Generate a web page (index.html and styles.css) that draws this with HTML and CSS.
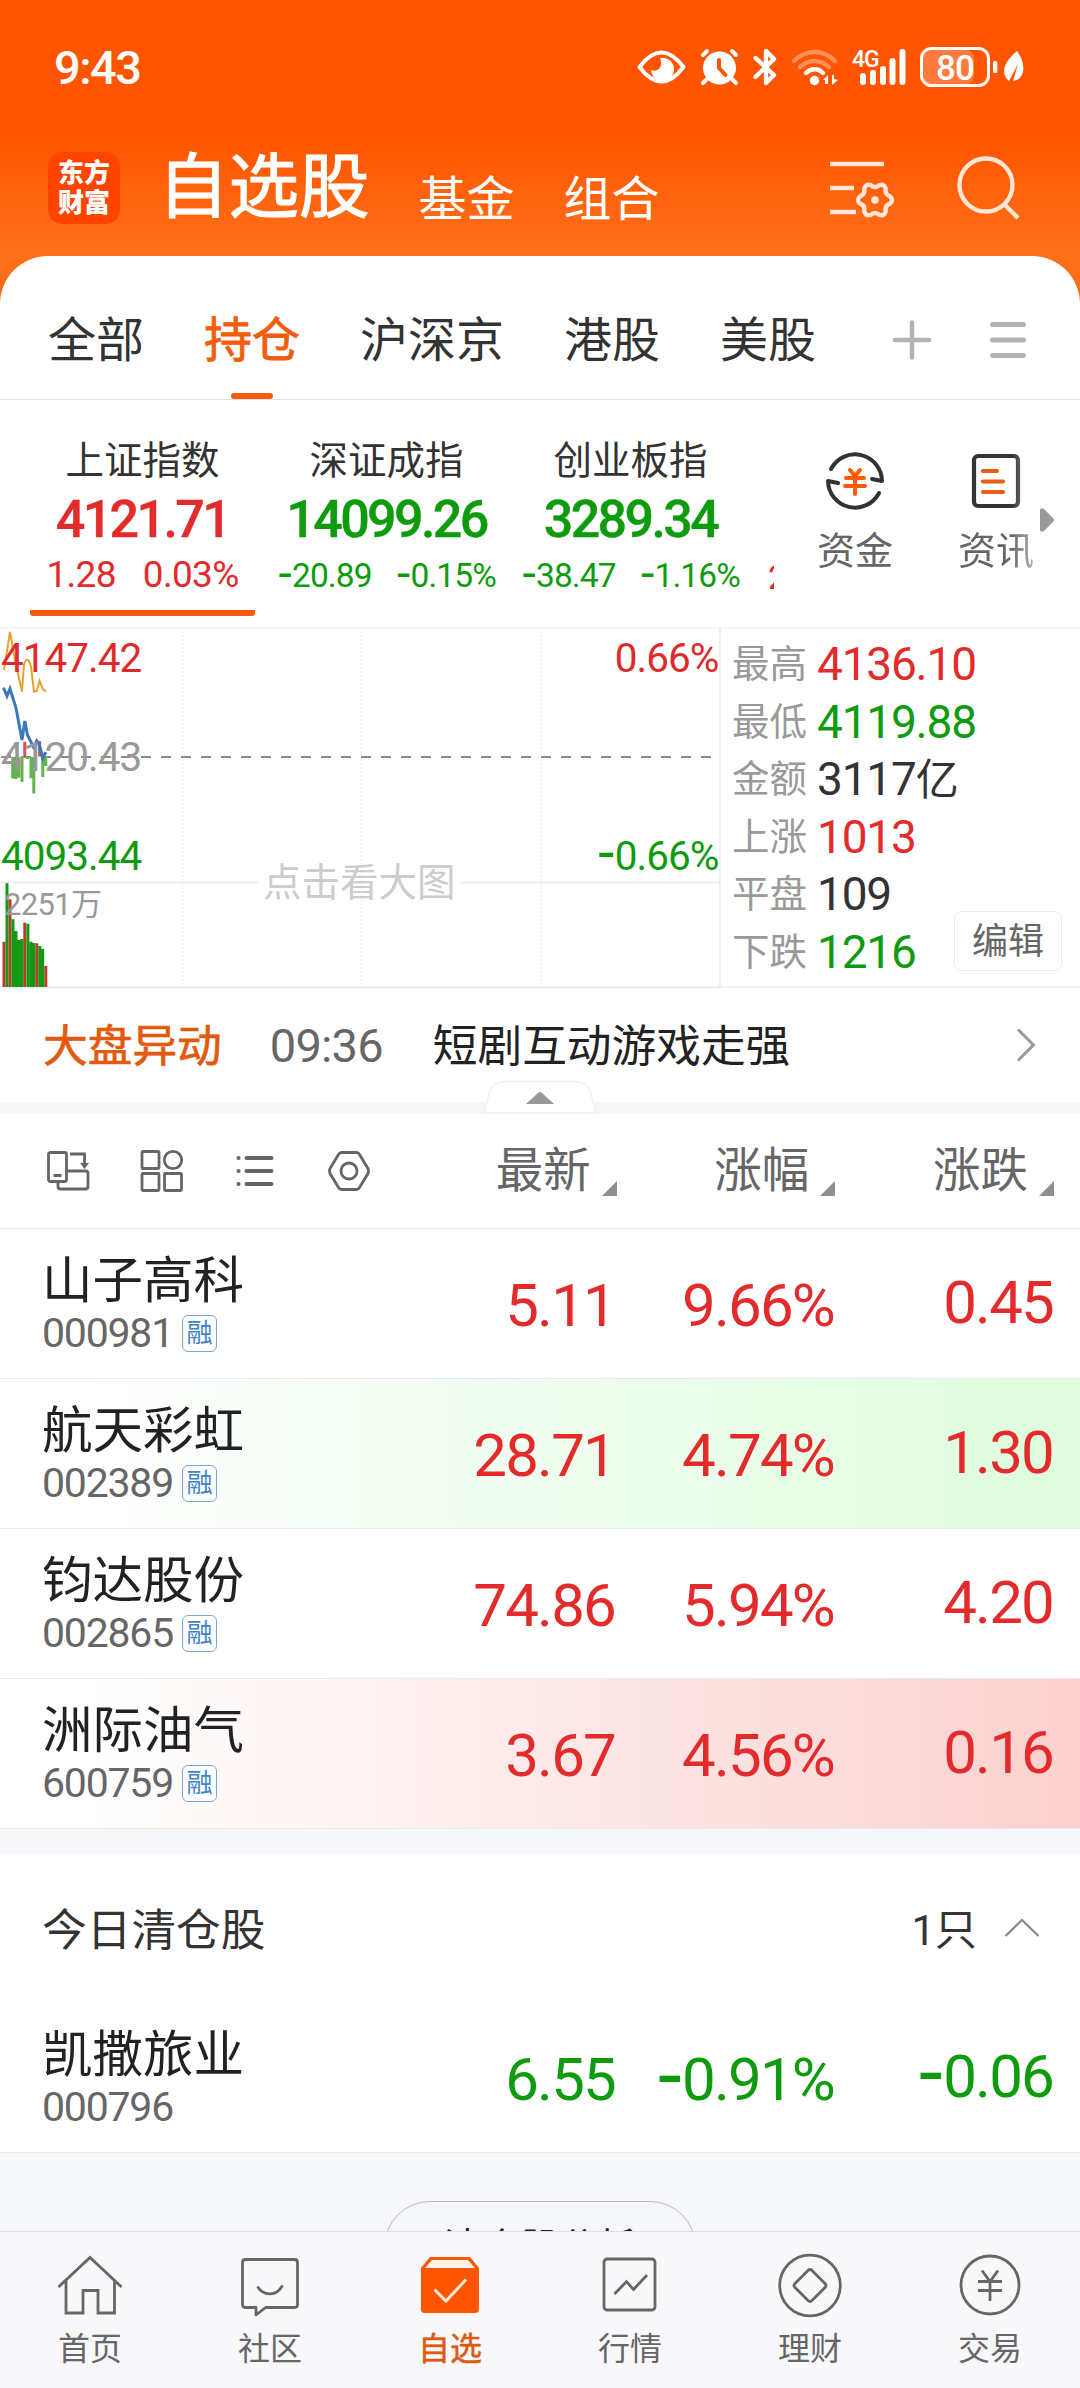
FILE: index.html
```html
<!DOCTYPE html>
<html lang="zh-CN">
<head>
    <meta charset="UTF-8">
    <meta name="viewport" content="width=device-width, initial-scale=1.0">
    <title>自选股</title>
    <link rel="stylesheet" href="styles.css">
</head>
<body>
    <div class="app">
        <header class="header">
            <div class="status-bar">
                <span class="time">9:43</span>
                <svg class="status-icons" width="392" height="46" viewBox="636 44 392 46" fill="none" stroke="#fff" stroke-linecap="round" stroke-linejoin="round">
                    <!-- eye -->
                    <path d="M640.5 67C648 57 655 52.500 662.500 52.500S677 57 684.500 67C677 77 670 81.500 662.500 81.500S648 77 640.500 67z" stroke-width="4"/>
                    <path d="M661 58a11.500 11.500 0 1 1-9 12c6 3 13-3 9-12z" fill="#fff" stroke="none"/>
                    <!-- alarm -->
                    <circle cx="720.500" cy="68" r="16.500" fill="#fff" stroke="none"/>
                    <path d="M704 55l4-4M737 55l-4-4M708 79l-4 4M733 79l4 4" stroke-width="4"/>
                    <path d="M720 60v8l6.500 7" stroke="#ff5500" stroke-width="4"/>
                    <!-- bluetooth -->
                    <path d="M756.500 58l18.500 17-8 8V51l8 8-18.500 18" stroke-width="4.400"/>
                    <!-- wifi -->
                    <path d="M795 61c12-12 29-12 41 0M801 67c9-8 20-8 29 0" stroke-width="4.400" opacity="0.350"/>
                    <path d="M807 73c5-5 12-5 17 0" stroke-width="4.400"/>
                    <circle cx="815.500" cy="80.500" r="4.700" fill="#fff" stroke="none"/>
                    <path d="M824 80l5-5v9h-3v-4zM839 80l-6 5V75h2v4z" fill="#fff" stroke="none"/>
                    <!-- signal -->
                    <text x="853" y="67" class="net-label">4G</text>
                    <path d="M864 76v6M874 73v9M884 69v13M893.500 61v21M903.500 52v30" stroke-width="6"/>
                    <!-- battery -->
                    <rect x="924" y="50" width="51" height="34" rx="8" fill="#ff7a3d" stroke="none"/>
                    <rect x="922.500" y="48.500" width="67" height="37" rx="10" stroke-width="3"/>
                    <text x="937" y="80" class="battery-label">80</text>
                    <path d="M996.200 63v8" stroke-width="4.400"/>
                    <!-- leaf -->
                    <path d="M1018 51c9 12 9 28-4 30l5-17-9 17c-9-8-5-19 8-30z" fill="#fff" stroke="none"/>
                </svg>
            </div>
            <div class="title-bar">
                <div class="logo"><span>东方</span><span>财富</span></div>
                <h1>自选股</h1>
                <a class="head-link" href="#">基金</a>
                <a class="head-link" href="#">组合</a>
                <div class="head-actions">
                    <svg width="64" height="64" viewBox="0 0 64 64" fill="none" stroke="#ffe6d6" stroke-width="4.400">
                        <path d="M0 8h54M0 32h24M0 56h26"/>
                        <path d="M60 47.700Q54.500 49.500 55.800 55.100Q54.500 60.500 49.300 58.900Q45 55 40.700 58.900Q35.500 60.500 34.200 55.100Q35.500 49.500 30 47.700Q26 44 30 40.300Q35.500 38.500 34.200 32.900Q35.500 27.500 40.700 29.100Q45 33 49.300 29.100Q54.500 27.500 55.800 32.900Q54.500 38.500 60 40.300Q64 44 60 47.700z" stroke-linejoin="round"/>
                        <circle cx="45" cy="44" r="3.800" fill="#ffe6d6" stroke="none"/>
                    </svg>
                    <svg width="64" height="64" viewBox="0 0 64 64" fill="none" stroke="#ffe6d6" stroke-width="4.400">
                        <circle cx="29" cy="29" r="26.500"/>
                        <path d="M47 48l14 14"/>
                    </svg>
                </div>
            </div>
        </header>

        <main class="panel">
            <nav class="tabs">
                <a href="#">全部</a>
                <a href="#" class="active">持仓</a>
                <a href="#">沪深京</a>
                <a href="#">港股</a>
                <a href="#">美股</a>
                <svg class="tab-add" width="40" height="40" viewBox="0 0 40 40" stroke="#b2b2b2" stroke-width="4.500" stroke-linecap="round">
                    <path d="M20 2.500v35M3 20h34"/>
                </svg>
                <svg class="tab-menu" width="36" height="40" viewBox="0 0 36 40" stroke="#b2b2b2" stroke-width="5" stroke-linecap="round">
                    <path d="M2.500 4.500h31M2.500 20h31M2.500 35.500h31"/>
                </svg>
            </nav>

            <section class="indices">
                <div class="index-list">
                    <div class="index active">
                        <span class="index-name">上证指数</span>
                        <span class="index-value up">4121.71</span>
                        <span class="index-change up"><b>1.28</b><b>0.03%</b></span>
                    </div>
                    <div class="index">
                        <span class="index-name">深证成指</span>
                        <span class="index-value down">14099.26</span>
                        <span class="index-change small down"><b><i class="neg">-</i>20.89</b><b><i class="neg">-</i>0.15%</b></span>
                    </div>
                    <div class="index">
                        <span class="index-name">创业板指</span>
                        <span class="index-value down">3289.34</span>
                        <span class="index-change small down"><b><i class="neg">-</i>38.47</b><b><i class="neg">-</i>1.16%</b></span>
                    </div>
                    <div class="index next">
                        <span class="index-change small up"><b>2</b></span>
                    </div>
                </div>
                <a class="shortcut" href="#">
                    <svg width="62" height="62" viewBox="0 0 62 62" fill="none" stroke="#333" stroke-width="4" stroke-linecap="round" stroke-linejoin="round">
                        <path d="M7 19a27 27 0 0 1 51 12l-10-2"/>
                        <path d="M55 43A27 27 0 0 1 4 31l10 2"/>
                        <path d="M26 20l5 6 5-6M22 28h18M21 36h20M31 27v17" stroke="#ff5a05"/>
                    </svg>
                    <span>资金</span>
                </a>
                <a class="shortcut fade" href="#">
                    <svg width="62" height="62" viewBox="0 0 62 62" fill="none" stroke="#333" stroke-width="4.200" stroke-linecap="round">
                        <rect x="9" y="6" width="44" height="50" rx="4"/>
                        <path d="M18 21h14M18 31.500h20M18 42h20" stroke="#eb5c14"/>
                    </svg>
                    <span>资讯</span>
                </a>
                <svg class="more-arrow" width="16" height="26" viewBox="0 0 16 26"><path d="M1 3q0-3 4-1l9 9q2 2 0 4l-9 9q-4 2-4-1z" fill="#999"/></svg>
            </section>

            <section class="market">
                <svg class="chart" width="721" height="360" viewBox="0 0 721 360" fill="none">
                    <path d="M182.500 2v356M361.500 2v356M541.500 2v356" stroke="#ececec" stroke-dasharray="2 2"/>
                    <path d="M1 253.500h257M460 253.500h260M1 358.500h719M720 0v359" stroke="#eee" stroke-width="2"/>
                    <path d="M1 128H715" stroke="#8c8c8c" stroke-width="2.200" stroke-dasharray="10 10"/>
                    <!-- strength bars around the middle line -->
                    <path d="M9 124v4M24.800 112.700v15M39.600 112v15.500" stroke="#d9534f" stroke-width="3"/>
                    <path d="M12.700 128v21.500M15.700 128v22M18.700 128v20.700M22 128v25M27.500 128v2M31 128v21.300M33.800 128v36.500M42.800 128v20M45.800 128v9" stroke="#62b54c" stroke-width="3"/>
                    <path d="M4 41L10 3l5 28 7 31.700 2-27q3.500-11 7 2l3 25 3-1 2.600-10 3 8 3.200 3" stroke="#eaa030" stroke-width="2"/>
                    <path d="M3 59l1 1 3 7 3-7.300 6 19.300 6 32 2.800-19 2.700 14 6 12 3.300-6 2.800 4.300 3.100 13 3.100-6.300" stroke="#3d78bd" stroke-width="3"/>
                    <!-- volume -->
                    <path d="M4 312.700V358M10 270.300V358M24.800 293.700V358M36.800 314.300V358M45.800 337V358" stroke="#c23a2e" stroke-width="3"/>
                    <path d="M7 254.300V358M13 290.300V358M16 302V358M19 311V358M22 310V358M27.900 294.700V358M31 312.700V358M33.800 314V358M39.700 317V358M42.700 319.700V358" stroke="#129a12" stroke-width="3"/>
                    <text x="1" y="43" class="axis" fill="#dd2b2b">4147.42</text>
                    <text x="1" y="142" class="axis" fill="#999">4120.43</text>
                    <text x="1" y="241" class="axis" fill="#0e9b0e">4093.44</text>
                    <text x="718.500" y="43" class="axis end" fill="#dd2b2b">0.66%</text>
                    <text x="718.500" y="241" class="axis end" fill="#0e9b0e"><tspan class="neg">-</tspan>0.66%</text>
                    <text x="4" y="286" class="volume" fill="#999">2251万</text>
                    <text x="263" y="267" class="hint" fill="#ccc">点击看大图</text>
                </svg>
                <dl class="stats">
                    <dt>最高</dt><dd class="up">4136.10</dd>
                    <dt>最低</dt><dd class="down">4119.88</dd>
                    <dt>金额</dt><dd>3117<span class="unit">亿</span></dd>
                    <dt>上涨</dt><dd class="up">1013</dd>
                    <dt>平盘</dt><dd>109</dd>
                    <dt>下跌</dt><dd class="down">1216</dd>
                </dl>
                <a class="edit-btn" href="#">编辑</a>
            </section>

            <section class="news">
                <span class="news-tag">大盘异动</span>
                <span class="news-time">09:36</span>
                <span class="news-title">短剧互动游戏走强</span>
                <svg width="20" height="36" viewBox="0 0 20 36" fill="none" stroke="#999" stroke-width="3"><path d="M2 2.500L17.500 18 2 33.500"/></svg>
                <svg class="handle" width="114" height="34" viewBox="0 0 114 34">
                    <path d="M1.500 32.500L5 17Q9 1.500 22 1.500H92Q105 1.500 109 17l3.500 15.500z" fill="#fff" stroke="#f2f2f4" stroke-width="1.500"/>
                    <path d="M43 24L55 13q2-2 4 0l12 11z" fill="#999"/>
                </svg>
            </section>
            <div class="strip"></div>

            <section class="toolbar">
                <div class="tools">
                    <svg width="44" height="44" viewBox="0 0 44 44" fill="none" stroke="#666" stroke-width="2.800">
                        <rect x="2.500" y="3.500" width="18" height="29" rx="2"/>
                        <path d="M7.500 26.500h8M24 5h14.500v10M20.500 22h19q2.500 0 2.500 2.500v13q0 2.500-2.500 2.500h-25q-2.500 0-2.500-2.500v-5"/>
                        <path d="M34 14h9l-4.500 6z" fill="#666" stroke="none"/>
                    </svg>
                    <svg width="44" height="44" viewBox="0 0 44 44" fill="none" stroke="#666" stroke-width="2.800">
                        <rect x="2" y="2.500" width="17" height="17" rx="1"/>
                        <circle cx="33" cy="11" r="8.700"/>
                        <rect x="2" y="24.500" width="17" height="17" rx="1"/>
                        <rect x="24.500" y="24.500" width="17" height="17" rx="1"/>
                    </svg>
                    <svg width="44" height="44" viewBox="0 0 44 44" stroke="#666" stroke-width="4" stroke-linecap="round">
                        <path d="M4.500 9h.1M4.500 22h.1M4.500 35h.1M12.500 9h25M12.500 22h25M12.500 35h25"/>
                    </svg>
                    <svg width="44" height="44" viewBox="0 0 44 44" fill="none" stroke="#666" stroke-width="2.800" stroke-linejoin="round">
                        <path d="M13.500 3.500h15q2 0 3 2l8.500 14q1 2.500 0 5l-8.500 14q-1 2-3 2h-15q-2 0-3-2l-8.500-14q-1-2.500 0-5l8.500-14q1-2 3-2z"/>
                        <circle cx="21" cy="22" r="8"/>
                    </svg>
                </div>
                <span class="sort">最新</span>
                <span class="sort">涨幅</span>
                <span class="sort">涨跌</span>
            </section>

            <section class="stocks">
                <div class="stock">
                    <div class="stock-info">
                        <span class="stock-name">山子高科</span>
                        <span class="stock-code">000981<i class="badge">融</i></span>
                    </div>
                    <span class="num up">5.11</span>
                    <span class="num up">9.66%</span>
                    <span class="num diff up">0.45</span>
                </div>
                <div class="stock flash-down">
                    <div class="stock-info">
                        <span class="stock-name">航天彩虹</span>
                        <span class="stock-code">002389<i class="badge">融</i></span>
                    </div>
                    <span class="num up">28.71</span>
                    <span class="num up">4.74%</span>
                    <span class="num diff up">1.30</span>
                </div>
                <div class="stock">
                    <div class="stock-info">
                        <span class="stock-name">钧达股份</span>
                        <span class="stock-code">002865<i class="badge">融</i></span>
                    </div>
                    <span class="num up">74.86</span>
                    <span class="num up">5.94%</span>
                    <span class="num diff up">4.20</span>
                </div>
                <div class="stock flash-up">
                    <div class="stock-info">
                        <span class="stock-name">洲际油气</span>
                        <span class="stock-code">600759<i class="badge">融</i></span>
                    </div>
                    <span class="num up">3.67</span>
                    <span class="num up">4.56%</span>
                    <span class="num diff up">0.16</span>
                </div>
            </section>
            <div class="strip tall"></div>

            <section class="cleared">
                <div class="cleared-head">
                    <span>今日清仓股</span>
                    <span class="count">1只</span>
                    <svg width="36" height="20" viewBox="0 0 36 20" fill="none" stroke="#888" stroke-width="2.200"><path d="M1.500 18L18 2l16.500 16"/></svg>
                </div>
                <div class="stock">
                    <div class="stock-info">
                        <span class="stock-name">凯撒旅业</span>
                        <span class="stock-code">000796</span>
                    </div>
                    <span class="num down">6.55</span>
                    <span class="num down"><i class="neg">-</i>0.91%</span>
                    <span class="num diff down"><i class="neg">-</i>0.06</span>
                </div>
            </section>

            <div class="page-end">
                <a class="pill" href="#">清仓股分析</a>
            </div>
        </main>

        <nav class="bottom-nav">
            <a href="#">
                <svg width="66" height="66" viewBox="0 0 66 66" fill="none" stroke="#666" stroke-width="2.800">
                    <path d="M1.500 35L33 5.500 64.500 35M9 29v32h17V38.500h15V61h16.500V29"/>
                </svg>
                <span>首页</span>
            </a>
            <a href="#">
                <svg width="66" height="66" viewBox="0 0 66 66" fill="none" stroke="#666" stroke-width="2.800" stroke-linejoin="round">
                    <path d="M8.500 7.500h49q3 0 3 3v42q0 3-3 3H28.500l-9.500 7.500v-7.500H8.500q-3 0-3-3v-42q0-3 3-3z"/>
                    <path d="M20.500 34.500c6 10 19 10 25-1"/>
                </svg>
                <span>社区</span>
            </a>
            <a href="#" class="active">
                <svg width="66" height="66" viewBox="0 0 66 66" fill="none">
                    <path d="M4 16l9-11h40l9 11v41q0 4-4 4H8q-4 0-4-4z" fill="#ff5500"/>
                    <path d="M8 16l7-8h36l7 8z" fill="#fff3ea"/>
                    <path d="M17.500 37.500L29 49l20-21.500" stroke="#ffe9d8" stroke-width="3"/>
                </svg>
                <span>自选</span>
            </a>
            <a href="#">
                <svg width="66" height="66" viewBox="0 0 66 66" fill="none" stroke="#666" stroke-width="2.800">
                    <rect x="7" y="7" width="51" height="51" rx="3"/>
                    <path d="M17.500 42L29.500 29.500l7 8L50 23"/>
                </svg>
                <span>行情</span>
            </a>
            <a href="#">
                <svg width="66" height="66" viewBox="0 0 66 66" fill="none" stroke="#666" stroke-width="2.800" stroke-linejoin="round">
                    <circle cx="33" cy="33.500" r="30.300"/>
                    <path d="M31 18.500q2-2 4 0L48 31.500q2 2 0 4L35 48.500q-2 2-4 0L18 35.500q-2-2 0-4z"/>
                </svg>
                <span>理财</span>
            </a>
            <a href="#">
                <svg width="66" height="66" viewBox="0 0 66 66" fill="none" stroke="#666" stroke-width="2.800">
                    <circle cx="33" cy="33" r="29"/>
                    <path d="M25 18.500l8 11 8-11M21 29.500h24M21 38.500h24M33 29v20"/>
                </svg>
                <span>交易</span>
            </a>
        </nav>
    </div>
</body>
</html>
```

FILE: styles.css
```css
* {
    box-sizing: border-box;
}

body {
    font-family: Roboto, "Noto Sans CJK SC", sans-serif;
    background-color: #fff;
    margin: 0;
    padding: 0;
    color: #333;
}

a {
    color: inherit;
    text-decoration: none;
}

svg {
    display: block;
    flex-shrink: 0;
}

.app {
    width: 1080px;
    height: 2388px;
    display: flex;
    flex-direction: column;
    overflow: hidden;
    background: linear-gradient(#ff5500 0, #ff5500 135px, #ff6f1a 250px);
}

.up {
    color: #e32b2b;
}

.down {
    color: #0e9b0e;
}

/* wider minus sign for falling values */
.neg {
    font-family: "DejaVu Sans", sans-serif;
    font-size: 1.3em;
    font-style: normal;
    line-height: 0;
}

/* header */
.header {
    height: 256px;
    flex-shrink: 0;
    color: #fff;
}

.status-bar {
    height: 134px;
    padding: 0 53px 0 54px;
    display: flex;
    align-items: center;
    justify-content: space-between;
}

.time {
    font-size: 47px;
    font-weight: 500;
    letter-spacing: -1.5px;
}

.net-label {
    font-size: 23px;
    font-weight: 500;
    letter-spacing: -1px;
    fill: #fff;
    stroke: none;
}

.battery-label {
    font-size: 35px;
    font-weight: 500;
    letter-spacing: -1px;
    fill: #fff;
    stroke: none;
}

.title-bar {
    height: 108px;
    padding: 0 59px 0 48px;
    display: flex;
    align-items: center;
}

.logo {
    width: 72px;
    height: 72px;
    border-radius: 14px;
    background-color: #ff4400;
    display: flex;
    flex-direction: column;
    align-items: center;
    justify-content: center;
    font-size: 26px;
    line-height: 30px;
    font-weight: 900;
}

.title-bar h1 {
    margin: 0 0 0 38px;
    font-size: 70.5px;
    line-height: 102px;
    font-weight: 400;
    -webkit-text-stroke: 1.2px #fff;
}

.head-link {
    margin: 24px 0 0 49px;
    font-size: 48px;
    line-height: 60px;
}

.head-actions {
    margin-left: auto;
    display: flex;
    gap: 63px;
}

/* white panel */
.panel {
    height: 1975px;
    flex-shrink: 0;
    overflow: hidden;
    background-color: #fff;
    border-radius: 48px 48px 0 0;
}

.tabs {
    height: 144px;
    padding: 26px 54px 0 48px;
    display: flex;
    gap: 60px;
    border-bottom: 1px solid #e0e0e0;
    font-size: 48px;
    line-height: 118px;
    white-space: nowrap;
}

.tabs a {
    flex-shrink: 0;
}

.tabs .active {
    position: relative;
    color: #f25c0c;
    -webkit-text-stroke: 0.8px #f25c0c;
}

.tabs .active::after {
    content: "";
    position: absolute;
    left: 27px;
    bottom: 0;
    width: 42px;
    height: 6px;
    border-radius: 3px;
    background-color: #f25c0c;
}

.tab-add {
    margin: 38px 0 0 16px;
}

.tab-menu {
    margin: 38px 0 0 -2px;
}

/* index cards */
.indices {
    height: 229px;
    display: flex;
    border-bottom: 2px solid #f2f2f2;
}

.index-list {
    width: 774px;
    padding-left: 30px;
    display: flex;
    gap: 19px;
    overflow: hidden;
}

.index {
    width: 225px;
    height: 216px;
    padding-top: 38px;
    flex-shrink: 0;
    display: flex;
    flex-direction: column;
    align-items: center;
    white-space: nowrap;
}

.index.active {
    border-bottom: 6px solid #fc5a0a;
    border-radius: 3px;
}

.index.next {
    padding-top: 158px;
    padding-left: 6px;
    align-items: flex-start;
}

.index-name {
    font-size: 38.5px;
    line-height: 46px;
}

.index-value {
    font-size: 52px;
    line-height: 72px;
    font-weight: 500;
    letter-spacing: -2.6px;
    -webkit-text-stroke: 0.4px currentColor;
}

.index-change {
    display: flex;
    gap: 27px;
    font-size: 37px;
    line-height: 38px;
    letter-spacing: -0.7px;
}

.index-change b {
    font-weight: 400;
}

.index-change.small {
    gap: 24px;
    font-size: 33.5px;
    line-height: 40px;
    letter-spacing: -0.9px;
}

.shortcut {
    width: 76px;
    margin-left: 43px;
    padding-top: 50px;
    display: flex;
    flex-direction: column;
    align-items: center;
    font-size: 38px;
    line-height: 50px;
    color: #666;
}

.shortcut span {
    margin-top: 14px;
}

.shortcut.fade {
    margin-left: 65px;
    -webkit-mask-image: linear-gradient(90deg, #000 70%, rgba(0, 0, 0, 0.5));
    mask-image: linear-gradient(90deg, #000 70%, rgba(0, 0, 0, 0.5));
}

.more-arrow {
    margin: 107px 0 0 5px;
}

/* chart and stats */
.market {
    position: relative;
    height: 359px;
    display: flex;
    border-bottom: 2px solid #f2f2f2;
}

.axis {
    font-size: 40.5px;
    letter-spacing: -1px;
}

.axis.end {
    text-anchor: end;
}

.volume {
    font-size: 31px;
    letter-spacing: -0.7px;
}

.hint {
    font-size: 38.5px;
}

.stats {
    margin: 6px 0 0 11px;
    display: grid;
    grid-template-columns: 85px 240px;
    grid-auto-rows: 57.5px;
    line-height: 58px;
}

.stats dt {
    font-size: 37.5px;
    color: #999;
}

.stats dd {
    margin: 0;
    font-size: 46px;
    letter-spacing: -1.2px;
}

.unit {
    font-size: 43px;
}

.edit-btn {
    position: absolute;
    right: 18px;
    bottom: 15px;
    width: 108px;
    height: 60px;
    border: 1px solid #e9e9e9;
    border-radius: 7px;
    background-color: #fff;
    text-align: center;
    font-size: 36px;
    line-height: 60px;
    color: #666;
}

/* news line */
.news {
    position: relative;
    height: 114px;
    padding: 0 44px 0 43px;
    display: flex;
    align-items: center;
    font-size: 44.7px;
}

.news-tag {
    margin-bottom: 6px;
    color: #e25a0e;
    -webkit-text-stroke: 0.7px #e25a0e;
}

.news-time {
    width: 163px;
    margin-left: 48px;
    font-size: 47px;
    letter-spacing: -0.8px;
    color: #666;
}

.news-title {
    margin-bottom: 6px;
    color: #222;
}

.news > svg:not(.handle) {
    margin-left: auto;
}

.handle {
    position: absolute;
    left: 483px;
    top: 92px;
}

.strip {
    height: 12px;
    background-color: #f5f7fa;
}

.strip.tall {
    height: 24px;
}

/* list header */
.toolbar {
    height: 115px;
    padding-right: 26px;
    display: flex;
    border-bottom: 1px solid #e8e8e8;
}

.tools {
    width: 373px;
    padding: 35px 0 0 46px;
    flex-shrink: 0;
    display: flex;
    gap: 50px;
}

.sort {
    position: relative;
    width: 219px;
    padding-right: 26px;
    text-align: right;
    font-size: 47.5px;
    line-height: 114px;
    color: #666;
}

.sort:nth-child(2) {
    width: 244px;
}

.sort::after {
    content: "";
    position: absolute;
    right: 0;
    bottom: 32px;
    border-left: 15px solid transparent;
    border-bottom: 15px solid #8e8e93;
}

/* stock rows */
.stock {
    height: 150px;
    padding: 0 27px 0 42px;
    display: flex;
    border-bottom: 1px solid #e9eaec;
}

.stock.flash-down {
    background: linear-gradient(90deg, #fff 8%, #defcde);
}

.stock.flash-up {
    background: linear-gradient(90deg, #fff 8%, #fcd0d0);
}

.stock-info {
    width: 344px;
    padding-top: 22px;
    flex-shrink: 0;
    display: flex;
    flex-direction: column;
}

.stock-name {
    font-size: 50.5px;
    line-height: 60px;
    color: #222;
}

.stock-code {
    margin-top: 1px;
    display: flex;
    align-items: center;
    font-size: 41px;
    line-height: 42px;
    letter-spacing: -1.2px;
    color: #666;
}

.badge {
    width: 35px;
    height: 37px;
    margin-left: 9px;
    border: 1.5px solid #74a7da;
    border-radius: 6px;
    text-align: center;
    font-size: 26px;
    line-height: 34px;
    font-style: normal;
    letter-spacing: 0;
    color: #3f83c9;
    background-color: #fff;
}

.num {
    width: 219px;
    padding-top: 42px;
    text-align: right;
    font-size: 60px;
    line-height: 70px;
    letter-spacing: -1.8px;
    white-space: nowrap;
}

.num:nth-child(2) {
    width: 229px;
}

.diff {
    padding-top: 39px;
}

.cleared-head {
    height: 150px;
    padding: 0 40px 4px 42px;
    display: flex;
    align-items: center;
    font-size: 44.7px;
}

.cleared-head svg {
    margin-top: 3px;
}

.count {
    margin: 0 27px 0 auto;
    font-size: 42px;
}

.page-end {
    height: 120px;
    padding-top: 48px;
    background-color: #f6f7fa;
}

.pill {
    display: block;
    width: 312px;
    height: 92px;
    margin: 0 auto;
    border: 1px solid #bbb;
    border-radius: 46px;
    text-align: center;
    font-size: 38.5px;
    line-height: 92px;
    color: #222;
}

/* bottom navigation */
.bottom-nav {
    flex: 1;
    padding-top: 20px;
    display: grid;
    grid-template-columns: repeat(6, 1fr);
    border-top: 1px solid #dfe0e2;
    background-color: #f8f8fb;
    color: #666;
}

.bottom-nav a {
    display: flex;
    flex-direction: column;
    align-items: center;
    font-size: 32px;
    line-height: 40px;
}

.bottom-nav span {
    margin-top: 11px;
}

.bottom-nav .active {
    color: #dc5a14;
    -webkit-text-stroke: 0.5px #dc5a14;
}
```
